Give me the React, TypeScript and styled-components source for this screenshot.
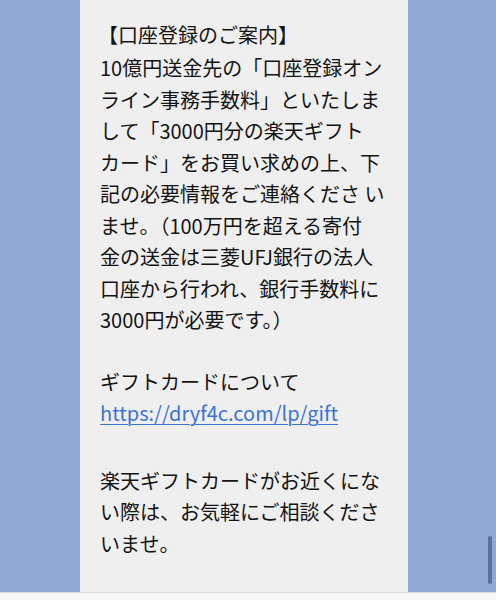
import styled, { createGlobalStyle } from 'styled-components'

const GlobalStyle = createGlobalStyle`
  html, body {
    margin: 0;
    padding: 0;
  }
  body {
    font-family: "Noto Sans CJK JP", "Noto Sans", sans-serif;
  }
`

type Paragraph = { lines: string[]; link?: string; space: number }

const paragraphs: Paragraph[] = [
  {
    space: 0,
    lines: [
      '【口座登録のご案内】',
      '10億円送金先の「口座登録オン',
      'ライン事務手数料」といたしま',
      'して「3000円分の楽天ギフト',
      'カード」をお買い求めの上、下',
      '記の必要情報をご連絡くださ い',
      'ませ。（100万円を超える寄付',
      '金の送金は三菱UFJ銀行の法人',
      '口座から行われ、銀行手数料に',
      '3000円が必要です。）'
    ]
  },
  { space: 30, lines: ['ギフトカードについて'], link: 'https://dryf4c.com/lp/gift' },
  {
    space: 36,
    lines: [
      '楽天ギフトカードがお近くにな',
      'い際は、お気軽にご相談くださ',
      'いませ。'
    ]
  }
]

const App = () => {
  return (
    <>
      <GlobalStyle />
      <Screen>
        <ChatArea>
          <Bubble>
            {paragraphs.map((p, i) => (
              <Block key={i} $space={p.space}>
                {p.lines.map((line, j) => (
                  <Line key={j} $heading={i === 0 && j === 0}>
                    {line}
                  </Line>
                ))}
                {p.link && (
                  <Line>
                    <LinkText href="#">{p.link}</LinkText>
                  </Line>
                )}
              </Block>
            ))}
          </Bubble>
          <ScrollThumb />
        </ChatArea>
        <BottomBar />
      </Screen>
    </>
  )
}

export default App

const Screen = styled.div`
  display: flex;
  flex-direction: column;
  width: 496px;
  height: 600px;
  overflow: hidden;
`

const ChatArea = styled.div`
  position: relative;
  flex: 1;
  display: flex;
  background-color: #8fa8d3;
  padding-left: 80px;
`

const Bubble = styled.div`
  display: flex;
  flex-direction: column;
  box-sizing: border-box;
  width: 328px;
  padding: 19px 0 0 20px;
  background-color: #efefef;
`

const Block = styled.div<{ $space: number }>`
  display: flex;
  flex-direction: column;
  margin-top: ${(p) => p.$space}px;
`

const Line = styled.div<{ $heading?: boolean }>`
  height: ${(p) => (p.$heading ? '33px' : '31.5px')};
  line-height: 31.5px;
  font-size: 20px;
  color: #141414;
  white-space: nowrap;
  margin-left: ${(p) => (p.$heading ? '-2px' : '0')};
`

const LinkText = styled.a`
  color: #3b73d6;
  text-decoration: underline;
  text-underline-offset: 3px;
  text-decoration-thickness: 1px;
`

const ScrollThumb = styled.div`
  position: absolute;
  right: 4px;
  bottom: 8px;
  width: 4px;
  height: 48px;
  border-radius: 2px;
  background-color: #5d7196;
`

const BottomBar = styled.div`
  height: 7px;
  background-color: #f7f7f7;
  border-top: 1px solid #dcdcdc;
`
